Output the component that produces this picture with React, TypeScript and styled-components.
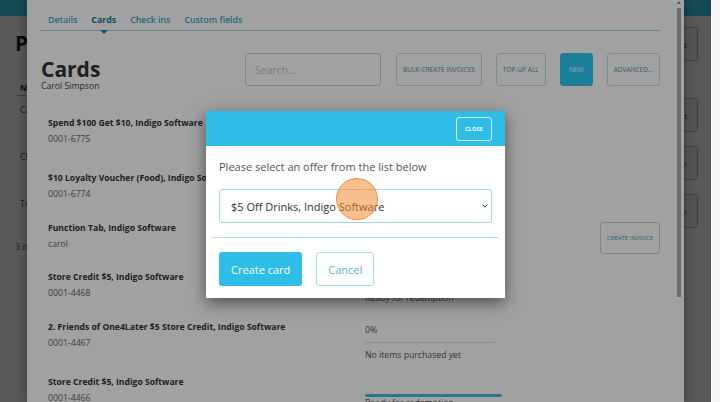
import React from "react";
import styled, { createGlobalStyle, css } from "styled-components";

const GlobalStyle = createGlobalStyle`
  * { box-sizing: border-box; }
  html, body { margin: 0; padding: 0; }
  body {
    background: #f7f7f7;
    font-family: "Open Sans", "Noto Sans", sans-serif;
    color: #333;
  }
  #root { width: 720px; height: 402px; overflow: hidden; }
`;

const Screen = styled.div`
  width: 720px;
  height: 402px;
  display: flex;
  background: #f7f7f7;
  overflow: hidden;
`;

const Stage = styled.div`
  position: relative;
  flex: none;
  width: 711px;
  height: 402px;
  overflow: hidden;
`;

/* ---------- base page (behind everything) ---------- */
const BasePage = styled.div`
  height: 100%;
  background: #fff;
  display: flex;
  flex-direction: column;
`;

const TopBar = styled.div`
  flex: none;
  height: 16px;
  background: #3bd3f5;
`;

const BaseBody = styled.div`
  flex: 1;
  display: flex;
  justify-content: space-between;
  padding: 0 13px 0 15px;
`;

const BaseMain = styled.div`
  width: 420px;
  padding-top: 15px;
`;

const BaseTitle = styled.h1`
  margin: 0;
  font-size: 21px;
  line-height: 24px;
  font-weight: 700;
  color: #222;
`;

const BaseTable = styled.div`
  margin-top: 27px;
`;

const BaseHeadRow = styled.div`
  padding: 0 5px 1px;
  font-size: 8.7px;
  line-height: 12px;
  font-weight: 700;
  color: #333;
  border-bottom: 1px solid #bbb;
`;

const BaseRow = styled.div`
  height: 47px;
  padding: 7.7px 5px 0;
  font-size: 8.7px;
  line-height: 12px;
  color: #555;
`;

const BaseFooter = styled.div`
  padding-top: 3.7px;
  font-size: 8.7px;
  line-height: 12px;
  color: #666;
`;

const BaseActions = styled.div`
  display: flex;
  flex-direction: column;
  align-items: flex-end;
  gap: 14px;
  padding-top: 11px;
`;

const BaseButton = styled.div<{ $gapAfter?: number }>`
  width: 56px;
  height: 34px;
  padding-right: 10px;
  display: flex;
  align-items: center;
  justify-content: flex-end;
  border: 1px solid #bbb;
  border-radius: 3px;
  background: #f4f4f4;
  font-size: 8px;
  color: #555;
  margin-bottom: ${(p) => p.$gapAfter ?? 0}px;
`;

/* ---------- large dialog (cards panel) ---------- */
const DrawerLayer = styled.div`
  position: absolute;
  inset: 0;
  background: rgba(0, 0, 0, 0.45);
  display: flex;
  justify-content: center;
`;

const Drawer = styled.div`
  width: 657px;
  height: 100%;
  background: #fff;
  display: flex;
  box-shadow: 0 0 10px rgba(0, 0, 0, 0.35);
`;

const DrawerContent = styled.div`
  flex: 1;
  min-width: 0;
  padding: 0 15px 0 14px;
  overflow: hidden;
`;

const ScrollTrack = styled.div`
  flex: none;
  width: 9px;
  display: flex;
  flex-direction: column;
  align-items: center;
  padding: 1px 1px 0 0;
  background: #fff;
`;

const ScrollArrow = styled.div`
  width: 0;
  height: 0;
  border-left: 2.5px solid transparent;
  border-right: 2.5px solid transparent;
  border-bottom: 3px solid #888;
  margin-bottom: 4px;
`;

const ScrollThumb = styled.div`
  width: 4px;
  height: 289px;
  background: #aaa;
`;

const TabBar = styled.nav`
  display: flex;
  padding-top: 13px;
  border-bottom: 1px solid #a6d3df;
`;

const Tab = styled.a<{ $active?: boolean }>`
  position: relative;
  padding: 0 7px 3px;
  font-size: 8.8px;
  line-height: 14px;
  font-weight: 600;
  color: #3aa8c8;
  white-space: nowrap;
  ${(p) =>
    p.$active &&
    css`
      font-weight: 700;
      color: #147a98;
      &::after {
        content: "";
        position: absolute;
        left: 50%;
        bottom: -4px;
        transform: translateX(-50%);
        border-left: 4px solid transparent;
        border-right: 4px solid transparent;
        border-top: 4px solid #178bb0;
      }
    `}
`;

const HeaderRow = styled.div`
  display: flex;
  justify-content: space-between;
  align-items: flex-start;
  margin-top: 22px;
`;

const TitleBlock = styled.div`
  padding-top: 5px;
`;

const PanelTitle = styled.h2`
  margin: 0;
  font-size: 21px;
  line-height: 22px;
  font-weight: 700;
  color: #333;
`;

const PanelSubtitle = styled.div`
  margin-top: 1px;
  font-size: 8.7px;
  line-height: 11px;
  color: #444;
`;

const Toolbar = styled.div`
  display: flex;
  gap: 14px;
`;

const SearchInput = styled.input`
  width: 136px;
  height: 33px;
  margin-right: 1px;
  padding: 0 9px;
  border: 1px solid #d2d2d2;
  border-radius: 3px;
  background: #fff;
  font-family: "Open Sans", sans-serif;
  font-size: 10.5px;
  color: #333;
  outline: none;
  &::placeholder {
    color: #c4c4c4;
  }
`;

const ToolButton = styled.button<{ $primary?: boolean }>`
  min-width: 33px;
  height: 33px;
  padding: 0 6px;
  border: 1px solid ${(p) => (p.$primary ? "#2bc8f5" : "#c3dde4")};
  border-radius: 3px;
  background: ${(p) => (p.$primary ? "#2bc8f5" : "#fff")};
  color: ${(p) => (p.$primary ? "#fff" : "#4a9ab3")};
  font-family: "Open Sans", sans-serif;
  font-size: 6.5px;
  text-transform: uppercase;
  white-space: nowrap;
`;

const CardList = styled.div`
  margin-top: 16.7px;
`;

const CardRow = styled.div<{ $h: number }>`
  display: grid;
  grid-template-columns: 317px 137px 1fr;
  align-items: start;
  height: ${(p) => p.$h}px;
  padding: 8px 0 0 7px;
`;

const CardInfo = styled.div`
  min-width: 0;
`;

const CardName = styled.div`
  font-size: 8.6px;
  line-height: 12px;
  font-weight: 700;
  color: #333;
  white-space: nowrap;
`;

const CardCode = styled.div`
  margin-top: 4px;
  font-size: 8.7px;
  line-height: 12px;
  color: #666;
`;

const StatusText = styled.div`
  font-size: 8.7px;
  line-height: 12px;
  color: #555;
  white-space: nowrap;
`;

const ProgressBlock = styled.div`
  padding-top: 18px;
`;

const ProgressTrack = styled.div`
  height: 3px;
  border-radius: 2px;
  background: #e6e6e6;
  overflow: hidden;
`;

const ProgressFill = styled.div`
  height: 100%;
  border-radius: 2px;
  background: #36c2dc;
`;

const PercentBlock = styled.div`
  padding-top: 3px;
`;

const StatusRule = styled.div`
  width: 130px;
  height: 1px;
  margin: 6px 0;
  background: #e2e2e2;
`;

const RowAction = styled.div`
  display: flex;
  justify-content: flex-end;
`;

const OutlineButton = styled.button`
  height: 32px;
  padding: 0 6px;
  border: 1px solid #bcd8df;
  border-radius: 3px;
  background: #fff;
  color: #4a9ab3;
  font-family: "Open Sans", sans-serif;
  font-size: 6px;
  text-transform: uppercase;
  white-space: nowrap;
`;

/* ---------- small modal ---------- */
const ModalLayer = styled.div`
  position: absolute;
  inset: 0;
  background: rgba(0, 0, 0, 0.37);
  display: flex;
  justify-content: center;
  align-items: flex-start;
  padding-top: 111px;
`;

const Modal = styled.div`
  width: 299px;
  background: #fff;
  box-shadow: 0 5px 15px rgba(0, 0, 0, 0.5);
`;

const ModalHeader = styled.div`
  height: 35px;
  padding: 0 13px;
  display: flex;
  align-items: center;
  justify-content: flex-end;
  background: #2dbde6;
`;

const CloseButton = styled.button`
  height: 24px;
  padding: 0 8px;
  border: 1px solid rgba(255, 255, 255, 0.8);
  border-radius: 3px;
  background: transparent;
  color: #fff;
  font-family: "Open Sans", sans-serif;
  font-size: 5.5px;
  font-weight: 700;
  letter-spacing: 0.2px;
`;

const ModalBody = styled.div`
  padding: 13px 13px 14px;
`;

const Prompt = styled.p`
  margin: 0;
  font-size: 11px;
  line-height: 15px;
  color: #555;
`;

const SelectWrap = styled.div`
  position: relative;
  margin-top: 15px;
`;

const OfferSelect = styled.select`
  display: block;
  width: 100%;
  height: 34px;
  padding: 0 20px 0 11px;
  appearance: none;
  border: 1px solid #a8d6e0;
  border-radius: 3px;
  background: #fff;
  font-family: "Open Sans", sans-serif;
  font-size: 11px;
  color: #333;
  outline: none;
`;

const Chevron = styled.svg`
  position: absolute;
  right: 4px;
  top: 15px;
  width: 6px;
  height: 4px;
  pointer-events: none;
`;

const Divider = styled.div`
  height: 1px;
  margin: 0 7px 0 6px;
  background: #bcdbe3;
`;

const ModalFooter = styled.div`
  display: flex;
  gap: 14px;
  padding: 14px 13px 12px;
`;

const PrimaryButton = styled.button`
  height: 34px;
  padding: 0 12px;
  border: none;
  border-radius: 3px;
  background: #2dbde6;
  color: #fff;
  font-family: "Open Sans", sans-serif;
  font-size: 11px;
`;

const SecondaryButton = styled.button`
  height: 34px;
  padding: 0 11px;
  border: 1px solid #a9dce8;
  border-radius: 3px;
  background: #fff;
  color: #52b9d4;
  font-family: "Open Sans", sans-serif;
  font-size: 11px;
`;

const ClickMarker = styled.div`
  position: absolute;
  left: 336px;
  top: 178px;
  width: 42px;
  height: 42px;
  border-radius: 50%;
  background: rgba(240, 140, 50, 0.55);
  border: 1px solid rgba(230, 130, 40, 0.7);
  pointer-events: none;
`;

type Status =
  | { kind: "progress"; value: number; label: string }
  | { kind: "percent"; percent: string; note: string }
  | { kind: "text"; label: string };

type CardItem = {
  name: string;
  code: string;
  h: number;
  status: Status;
  action?: string;
};

const cards: CardItem[] = [
  { name: "Spend $100 Get $10, Indigo Software", code: "0001-6775", h: 55, status: { kind: "progress", value: 100, label: "Ready for redemption" } },
  { name: "$10 Loyalty Voucher (Food), Indigo Software", code: "0001-6774", h: 50, status: { kind: "progress", value: 100, label: "Ready for redemption" } },
  { name: "Function Tab, Indigo Software", code: "carol", h: 49, status: { kind: "text", label: "$0.00 owing" }, action: "Create invoice" },
  { name: "Store Credit $5, Indigo Software", code: "0001-4468", h: 50, status: { kind: "progress", value: 100, label: "Ready for redemption" } },
  { name: "2. Friends of One4Later $5 Store Credit, Indigo Software", code: "0001-4467", h: 55, status: { kind: "percent", percent: "0%", note: "No items purchased yet" } },
  { name: "Store Credit $5, Indigo Software", code: "0001-4466", h: 60, status: { kind: "progress", value: 100, label: "Ready for redemption" } },
];

function StatusCell({ status }: { status: Status }) {
  if (status.kind === "progress") {
    return (
      <ProgressBlock>
        <ProgressTrack>
          <ProgressFill style={{ width: `${status.value}%` }} />
        </ProgressTrack>
        <StatusText>{status.label}</StatusText>
      </ProgressBlock>
    );
  }
  if (status.kind === "percent") {
    return (
      <PercentBlock>
        <StatusText>{status.percent}</StatusText>
        <StatusRule />
        <StatusText>{status.note}</StatusText>
      </PercentBlock>
    );
  }
  return (
    <PercentBlock>
      <StatusText>{status.label}</StatusText>
    </PercentBlock>
  );
}

export default function App() {
  return (
    <>
      <GlobalStyle />
      <Screen>
        <Stage>
          <BasePage>
            <TopBar />
            <BaseBody>
              <BaseMain>
                <BaseTitle>Patrons</BaseTitle>
                <BaseTable>
                  <BaseHeadRow>Name</BaseHeadRow>
                  <BaseRow>Carol Simpson</BaseRow>
                  <BaseRow>Chris Taylor</BaseRow>
                  <BaseRow>Tom Baker</BaseRow>
                  <BaseFooter>3 items</BaseFooter>
                </BaseTable>
              </BaseMain>
              <BaseActions>
                <BaseButton $gapAfter={23}>Add</BaseButton>
                <BaseButton>Edit</BaseButton>
                <BaseButton>Merge</BaseButton>
                <BaseButton>Delete</BaseButton>
              </BaseActions>
            </BaseBody>
          </BasePage>

          <DrawerLayer>
            <Drawer>
              <DrawerContent>
                <TabBar>
                  <Tab>Details</Tab>
                  <Tab $active>Cards</Tab>
                  <Tab>Check ins</Tab>
                  <Tab>Custom fields</Tab>
                </TabBar>
                <HeaderRow>
                  <TitleBlock>
                    <PanelTitle>Cards</PanelTitle>
                    <PanelSubtitle>Carol Simpson</PanelSubtitle>
                  </TitleBlock>
                  <Toolbar>
                    <SearchInput placeholder="Search..." readOnly />
                    <ToolButton>Bulk-create invoices</ToolButton>
                    <ToolButton>Top-up all</ToolButton>
                    <ToolButton $primary>New</ToolButton>
                    <ToolButton>Advanced...</ToolButton>
                  </Toolbar>
                </HeaderRow>
                <CardList>
                  {cards.map((c, i) => (
                    <CardRow key={i} $h={c.h}>
                      <CardInfo>
                        <CardName>{c.name}</CardName>
                        <CardCode>{c.code}</CardCode>
                      </CardInfo>
                      <StatusCell status={c.status} />
                      <RowAction>
                        {c.action && <OutlineButton>{c.action}</OutlineButton>}
                      </RowAction>
                    </CardRow>
                  ))}
                </CardList>
              </DrawerContent>
              <ScrollTrack>
                <ScrollArrow />
                <ScrollThumb />
              </ScrollTrack>
            </Drawer>
          </DrawerLayer>

          <ModalLayer>
            <Modal>
              <ModalHeader>
                <CloseButton>CLOSE</CloseButton>
              </ModalHeader>
              <ModalBody>
                <Prompt>Please select an offer from the list below</Prompt>
                <SelectWrap>
                  <OfferSelect defaultValue="drinks">
                    <option value="drinks">$5 Off Drinks, Indigo Software</option>
                    <option value="spend">Spend $100 Get $10, Indigo Software</option>
                    <option value="credit">Store Credit $5, Indigo Software</option>
                  </OfferSelect>
                  <Chevron viewBox="0 0 6 4">
                    <polyline points="0.6,0.6 3,3.2 5.4,0.6" fill="none" stroke="#333" strokeWidth="1" />
                  </Chevron>
                </SelectWrap>
              </ModalBody>
              <Divider />
              <ModalFooter>
                <PrimaryButton>Create card</PrimaryButton>
                <SecondaryButton>Cancel</SecondaryButton>
              </ModalFooter>
            </Modal>
          </ModalLayer>

          <ClickMarker />
        </Stage>
      </Screen>
    </>
  );
}
